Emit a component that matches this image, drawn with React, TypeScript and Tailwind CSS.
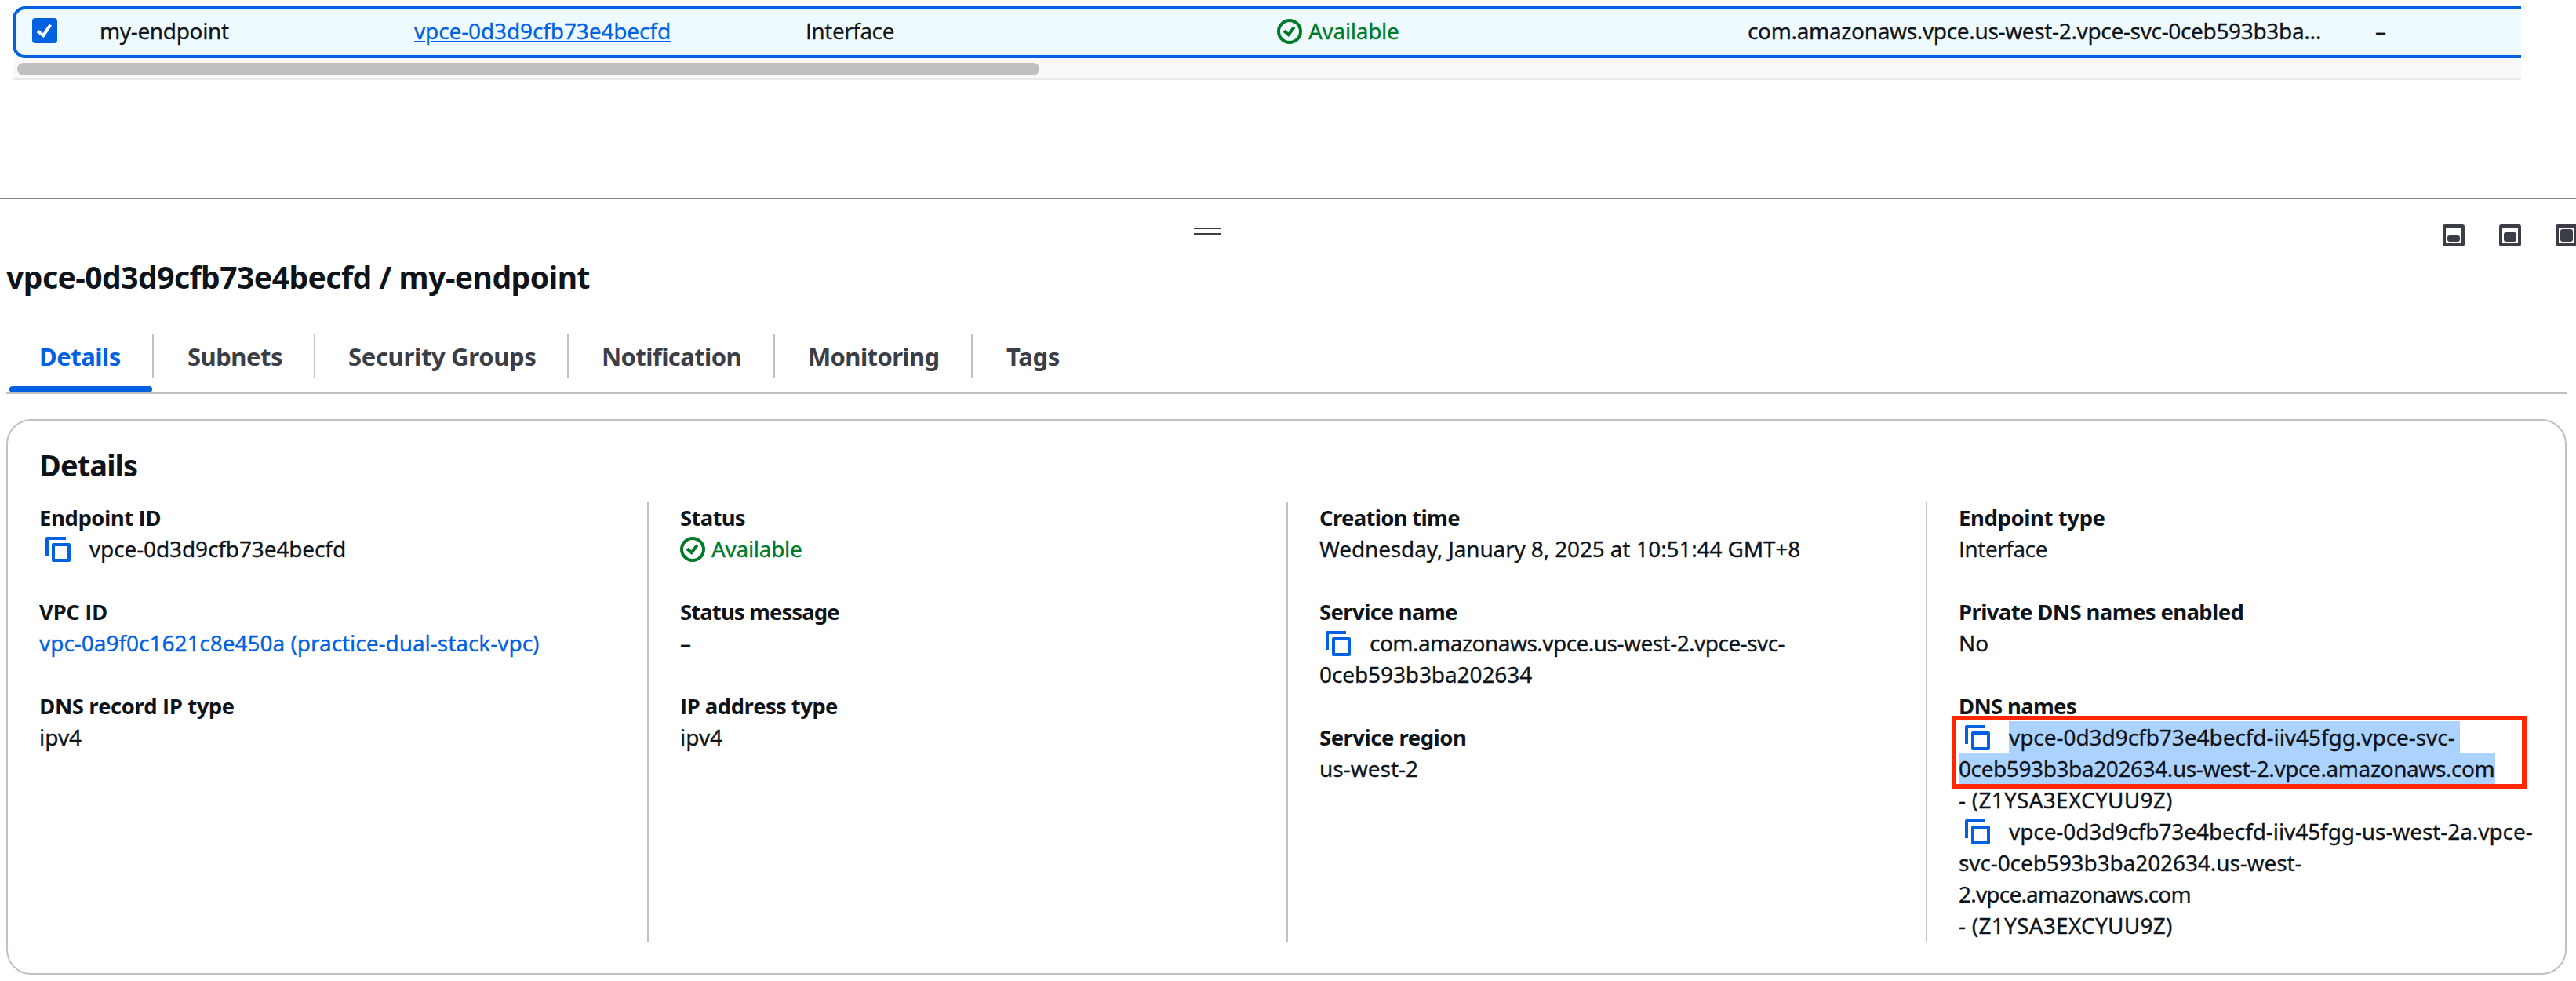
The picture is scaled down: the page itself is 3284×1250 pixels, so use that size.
import type { ReactNode } from "react";

const OPEN = "font-['Open_Sans','Noto_Sans',sans-serif]";

function StatusOk() {
  return (
    <span className="flex items-center gap-2 text-[#007a28]">
      <svg width="32" height="32" viewBox="0 0 32 32" fill="none" stroke="currentColor" strokeWidth="4" className="mt-0.5 shrink-0">
        <circle cx="16" cy="16" r="14" />
        <path d="M9 15.2l5.6 4.9 7.2-9.3" />
      </svg>
      <span className="tracking-[-0.3px]">Available</span>
    </span>
  );
}

function CopyIcon() {
  return (
    <svg
      width="32"
      height="32"
      viewBox="0 0 32 32"
      fill="none"
      stroke="#0161e0"
      strokeWidth="4"
      strokeLinejoin="round"
      className="ml-2 mr-6 inline-block shrink-0 align-[-6px]"
    >
      <path d="M2 24V2h24" />
      <rect x="10" y="10" width="20" height="20" />
    </svg>
  );
}

function Field({ label, labelClass = "", children }: { label: string; labelClass?: string; children: ReactNode }) {
  return (
    <div>
      <dt className={`text-[27.5px] font-bold leading-[41px] -mb-px [-webkit-text-stroke:0] ${labelClass}`}>{label}</dt>
      <dd className="whitespace-nowrap">{children}</dd>
    </div>
  );
}

function Column({ first = false, className, children }: { first?: boolean; className: string; children: ReactNode }) {
  return (
    <dl className={`h-[560px] ${first ? "" : "border-l-2 border-[#c0c0c7] pl-10"} ${className}`}>
      <div className="-mt-px flex flex-col gap-10">{children}</div>
    </dl>
  );
}

const tabs = [
  { name: "Details", cls: "w-[188px] pl-[42px] tracking-[-0.5px]", active: true },
  { name: "Subnets", cls: "w-[206px] pl-[43px] tracking-[-0.5px]" },
  { name: "Security Groups", cls: "w-[323px] pl-[42px] tracking-[-0.33px]" },
  { name: "Notification", cls: "w-[263px] pl-[42px] tracking-[-0.62px]" },
  { name: "Monitoring", cls: "w-[252px] pl-[42px] tracking-[-0.62px]" },
  { name: "Tags", cls: "w-[180px] pl-[43px] tracking-[-0.28px]" },
];

function PanelIcon({ level }: { level: string }) {
  return (
    <button className="flex size-7 shrink-0 flex-col justify-end rounded-[3px] border-4 border-[#3b3d47] p-0.5">
      <span className={`block w-full rounded-[3px] bg-[#3b3d47] ${level}`} />
    </button>
  );
}

export default function App() {
  return (
    <div className="h-[1250px] w-[3284px] overflow-hidden bg-white font-['Noto_Sans',sans-serif] text-[28px] leading-10 text-[#0f141a] [-webkit-text-stroke:0.3px]">
      <section className="h-[252px] pl-4 pt-2">
        <div className="flex h-[66px] w-[3198px] items-center whitespace-nowrap rounded-l-2xl border-4 border-r-0 border-[#0161e0] bg-[#effaff] pb-1 pl-[21px]">
          <svg width="32" height="32" viewBox="0 0 32 32" className="mr-[54px] shrink-0">
            <rect width="32" height="32" rx="4" fill="#0161e0" />
            <path d="M7 16.6l7.2 5.6 9.2-13.6" fill="none" stroke="#fff" strokeWidth="4" />
          </svg>
          <span className="w-[401px] shrink-0 tracking-[-0.35px]">my-endpoint</span>
          <a className="w-[499px] shrink-0 tracking-[-0.12px] text-[#0161e0] underline decoration-2 underline-offset-2">
            vpce-0d3d9cfb73e4becfd
          </a>
          <span className={`w-[601px] shrink-0 tracking-[-0.36px] ${OPEN}`}>Interface</span>
          <span className="w-[600px] shrink-0">
            <StatusOk />
          </span>
          <span className="w-[800px] shrink-0 tracking-[-0.34px]">com.amazonaws.vpce.us-west-2.vpce-svc-0ceb593b3ba…</span>
          <span>–</span>
        </div>
        <div className="h-7 w-[3198px] border-b-2 border-[#e9e9e9] bg-[#f9f9f9] pl-1.5 pt-1.5">
          <div className="h-4 w-[1303px] rounded-full bg-[#c0c0c0]" />
        </div>
      </section>

      <section className="border-t-2 border-[#84848c]">
        <div className="flex h-[68px] items-start pl-[1522px] pt-8">
          <div className="mt-1 h-[9px] w-[34px] shrink-0 border-y-2 border-[#3b3d47]" />
          <div className="ml-[1558px] flex shrink-0 gap-11">
            <PanelIcon level="h-2" />
            <PanelIcon level="h-3" />
            <PanelIcon level="h-4" />
          </div>
        </div>

        <h1 className="ml-2 mt-[6px] h-[50px] whitespace-nowrap text-[39px] font-bold leading-[50px] tracking-[-0.51px] [-webkit-text-stroke:0]">
          vpce-0d3d9cfb73e4becfd / my-endpoint
        </h1>

        <div className="ml-2 mt-12 flex h-[76px] w-[3264px] whitespace-nowrap text-[31px] font-bold [-webkit-text-stroke:0]">
          {tabs.map((t, i) => (
            <div key={t.name} className="shrink-0">
              <div
                className={`flex h-14 items-center pb-px ${t.cls} ${t.active ? "text-[#0161e0]" : "text-[#3b3d47]"} ${
                  i < tabs.length - 1 ? "border-r-2 border-[#c0c0c7]" : ""
                }`}
              >
                {t.name}
              </div>
              {t.active && <div className="ml-1 mt-[10px] h-2 w-[182px] rounded-full bg-[#0161e0]" />}
            </div>
          ))}
        </div>
        <div className="ml-2 -mt-0.5 h-0.5 w-[3264px] bg-[#c0c0c7]" />

        <div className="ml-2 mt-8 h-[708px] w-[3264px] rounded-[32px] border-2 border-[#c0c0c7] pl-10">
          <h2 className="mt-[31px] h-[50px] text-[38px] font-bold leading-[50px] tracking-[-0.9px] [-webkit-text-stroke:0]">Details</h2>
          <div className="mt-[23px] flex">
            <Column first className="w-[775px]">
              <Field label="Endpoint ID" labelClass={`tracking-[-0.48px] ${OPEN}`}>
                <CopyIcon />
                <span className="tracking-[-0.12px]">vpce-0d3d9cfb73e4becfd</span>
              </Field>
              <Field label="VPC ID" labelClass={`tracking-[-0.4px] ${OPEN}`}>
                <a className="tracking-[-0.03px] text-[#0161e0]">vpc-0a9f0c1621c8e450a (practice-dual-stack-vpc)</a>
              </Field>
              <Field label="DNS record IP type" labelClass={`tracking-[-0.45px] ${OPEN}`}>
                ipv4
              </Field>
            </Column>
            <Column className="w-[815px]">
              <Field label="Status" labelClass="tracking-[-0.7px]">
                <StatusOk />
              </Field>
              <Field label="Status message" labelClass="tracking-[-0.9px]">
                –
              </Field>
              <Field label="IP address type" labelClass={`tracking-[-0.58px] ${OPEN}`}>
                ipv4
              </Field>
            </Column>
            <Column className="w-[815px]">
              <Field label="Creation time" labelClass="tracking-[-0.7px]">
                <span className="tracking-[-0.15px]">Wednesday, January 8, 2025 at 10:51:44 GMT+8</span>
              </Field>
              <Field label="Service name" labelClass="tracking-[-0.6px]">
                <CopyIcon />
                <span className="tracking-[-0.53px]">com.amazonaws.vpce.us-west-2.vpce-svc-</span>
                <br />
                <span className="tracking-[-0.1px]">0ceb593b3ba202634</span>
              </Field>
              <Field label="Service region" labelClass="tracking-[-0.5px]">
                us-west-2
              </Field>
            </Column>
            <Column className="w-[775px]">
              <Field label="Endpoint type" labelClass="tracking-[-0.4px]">
                <span className={`tracking-[-0.36px] ${OPEN}`}>Interface</span>
              </Field>
              <Field label="Private DNS names enabled" labelClass="tracking-[-0.62px]">
                No
              </Field>
              <Field label="DNS names" labelClass="tracking-[-0.7px]">
                <div className="relative">
                  <div className="h-10">
                    <CopyIcon />
                    <span className="inline-block h-10 w-[575px] bg-[#acd2ff] tracking-[-0.05px]">
                      vpce-0d3d9cfb73e4becfd-iiv45fgg.vpce-svc-
                    </span>
                  </div>
                  <div className="w-[684px] bg-[#acd2ff] tracking-[-0.41px]">
                    0ceb593b3ba202634.us-west-2.vpce.amazonaws.com
                  </div>
                  <div className="absolute -left-[9px] -top-[7px] h-[93px] w-[733px] border-[6px] border-[#ff2600]" />
                </div>
                <div className="tracking-[0.25px]">- (Z1YSA3EXCYUU9Z)</div>
                <div>
                  <CopyIcon />
                  <span className="tracking-[-0.08px]">vpce-0d3d9cfb73e4becfd-iiv45fgg-us-west-2a.vpce-</span>
                </div>
                <div className="tracking-[-0.1px]">svc-0ceb593b3ba202634.us-west-</div>
                <div className="tracking-[-0.8px]">2.vpce.amazonaws.com</div>
                <div className="tracking-[0.25px]">- (Z1YSA3EXCYUU9Z)</div>
              </Field>
            </Column>
          </div>
        </div>
      </section>
    </div>
  );
}
